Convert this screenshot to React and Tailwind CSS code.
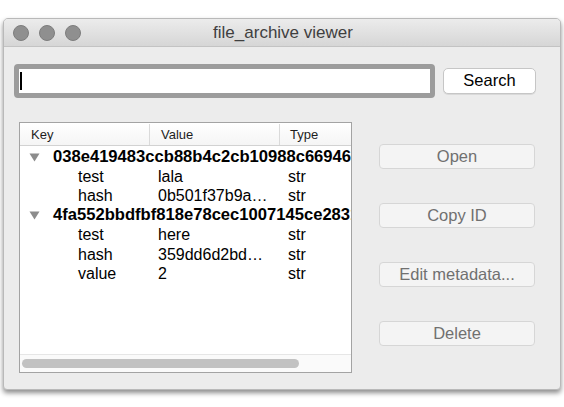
import React from 'react';

const font = { fontFamily: '"Liberation Sans", Arial, sans-serif' };

const records = [
  {
    id: '038e419483ccb88b4c2cb10988c669466a1b2f',
    fields: [
      { key: 'test', value: 'lala', type: 'str' },
      { key: 'hash', value: '0b501f37b9a…', type: 'str' },
    ],
  },
  {
    id: '4fa552bbdfbf818e78cec1007145ce2831c9d0',
    fields: [
      { key: 'test', value: 'here', type: 'str' },
      { key: 'hash', value: '359dd6d2bd…', type: 'str' },
      { key: 'value', value: '2', type: 'str' },
    ],
  },
];

const Disclosure = () => (
  <svg width="11" height="9" viewBox="0 0 11 9" className="shrink-0">
    <path d="M0.5 0.5 L10.5 0.5 L5.5 8.5 Z" fill="#8c8c8c" />
  </svg>
);

const SideButton = ({ children }) => (
  <button
    type="button"
    disabled
    className="h-[25px] w-[156px] rounded-[4px] border border-[#d6d6d6] bg-[#f4f4f4] text-[16.5px] leading-none text-[#707070]"
  >
    {children}
  </button>
);

const App = () => {
  return (
    <div className="h-[407px] w-[564px] overflow-hidden bg-white" style={font}>
      <div className="ml-[3px] mt-[18px] flex h-[372px] w-[558px] flex-col overflow-hidden rounded-t-[5px] rounded-b-[4px] border border-[#b9b9b9] bg-[#ececec] shadow-[0_3px_5px_rgba(0,0,0,0.45)]">
        {/* title bar */}
        <div className="relative flex h-[28px] shrink-0 items-center border-b border-[#c3c3c3] bg-gradient-to-b from-[#ececec] to-[#d6d6d6] pl-[9px]">
          <div className="flex gap-[10px]">
            <span className="h-[16px] w-[16px] rounded-full border border-[#7d7d7d] bg-[#8f8f8f]" />
            <span className="h-[16px] w-[16px] rounded-full border border-[#7d7d7d] bg-[#8f8f8f]" />
            <span className="h-[16px] w-[16px] rounded-full border border-[#7d7d7d] bg-[#8f8f8f]" />
          </div>
          <div className="pointer-events-none absolute inset-0 flex items-center justify-center pl-[2px] text-[17px] text-[#3f3f3f]">
            file_archive viewer
          </div>
        </div>

        {/* search row */}
        <div className="mt-[17px] flex items-center pl-[10px]">
          <div className="flex h-[34px] w-[421px] items-center rounded-[4px] border-[5px] border-[#9c9c9c] bg-white pl-[1px]">
            <span className="h-[18px] w-[2px] bg-black" />
          </div>
          <button
            type="button"
            className="ml-[8px] h-[26px] w-[93px] rounded-[5px] border border-[#c6c6c6] bg-white pb-[1px] text-[16.5px] leading-none text-black shadow-[0_1px_0_rgba(0,0,0,0.08)]"
          >
            Search
          </button>
        </div>

        {/* main row */}
        <div className="mt-[24px] flex pl-[15px]">
          <div className="flex h-[251px] w-[333px] flex-col overflow-hidden border border-[#a3a3a3] bg-white">
            {/* header */}
            <div className="flex h-[23px] shrink-0 items-center border-b border-[#d2d2d2] bg-gradient-to-b from-white to-[#f5f5f5] pt-[1px] text-[13px] text-[#1e1e1e]">
              <div className="flex h-full w-[130px] items-center border-r border-[#dadada] pl-[11px]">Key</div>
              <div className="flex h-full w-[130px] items-center border-r border-[#dadada] pl-[11px]">Value</div>
              <div className="flex h-full items-center pl-[10px]">Type</div>
            </div>

            {/* rows */}
            <div className="flex-1 overflow-hidden pt-[2px] text-[16px] text-black">
              {records.map((rec) => (
                <div key={rec.id}>
                  <div className="flex h-[19.4px] items-center whitespace-nowrap pl-[9px]">
                    <Disclosure />
                    <span className="ml-[13px] text-[16.6px] font-bold">{rec.id}</span>
                  </div>
                  {rec.fields.map((f) => (
                    <div key={f.key} className="flex h-[19.4px] items-center whitespace-nowrap">
                      <span className="w-[138px] pl-[58px]">{f.key}</span>
                      <span className="w-[130px] overflow-hidden">{f.value}</span>
                      <span>{f.type}</span>
                    </div>
                  ))}
                </div>
              ))}
            </div>

            {/* horizontal scrollbar */}
            <div className="flex h-[18px] shrink-0 items-center border-t border-[#e6e6e6] bg-[#fafafa] pl-[2px]">
              <div className="h-[9px] w-[277px] rounded-full bg-[#c2c2c2]" />
            </div>
          </div>

          <div className="ml-[27px] flex flex-col gap-[34px] pt-[22px]">
            <SideButton>Open</SideButton>
            <SideButton>Copy ID</SideButton>
            <SideButton>Edit metadata...</SideButton>
            <SideButton>Delete</SideButton>
          </div>
        </div>
      </div>
    </div>
  );
};

export default App;
